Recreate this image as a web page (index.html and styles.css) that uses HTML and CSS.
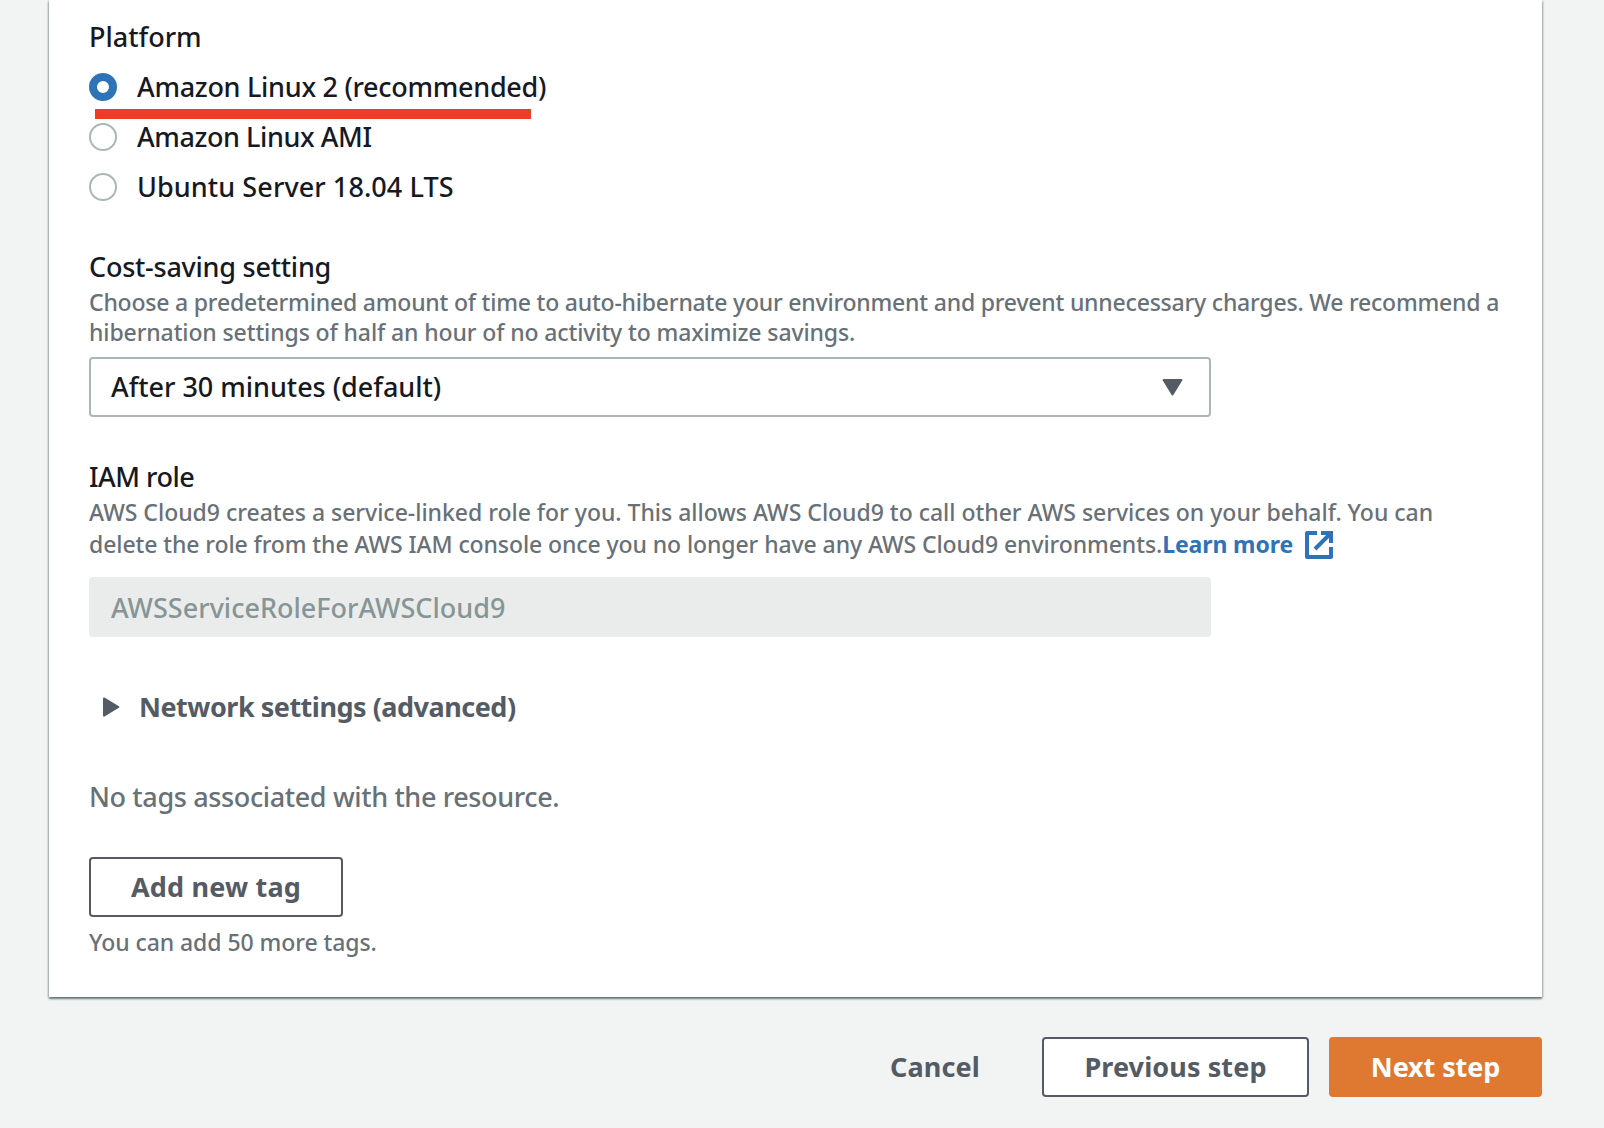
FILE: index.html
```html
<!DOCTYPE html>
<html lang="en">
<head>
<meta charset="utf-8">
<title>Create environment</title>
<link rel="stylesheet" href="styles.css">
</head>
<body>
<main class="panel">
  <div class="label ls-platform">Platform</div>
  <div class="radios">
    <label class="radio marked"><span class="dot on"></span><span class="ls-al2">Amazon Linux 2 (recommended)</span></label>
    <label class="radio"><span class="dot"></span><span class="ls-ami">Amazon Linux AMI</span></label>
    <label class="radio"><span class="dot"></span><span class="ls-ubuntu">Ubuntu Server 18.04 LTS</span></label>
  </div>

  <section class="field cost">
    <div class="label ls-cost">Cost-saving setting</div>
    <div class="desc">
      <span class="line ls-choose">Choose a predetermined amount of time to auto-hibernate your environment and prevent unnecessary charges. We recommend a</span>
      <span class="line ls-hib">hibernation settings of half an hour of no activity to maximize savings.</span>
    </div>
    <div class="select">
      <span class="ls-after">After 30 minutes (default)</span>
      <svg class="caret" width="21" height="17" viewBox="0 0 21 17"><path d="M1.6 1h17.8L10.5 15.4z" fill="#545b64" stroke="#545b64" stroke-width="2" stroke-linejoin="round"/></svg>
    </div>
  </section>

  <section class="field iam">
    <div class="label ls-iam">IAM role</div>
    <div class="desc loose">
      <span class="line ls-aws">AWS Cloud9 creates a service-linked role for you. This allows AWS Cloud9 to call other AWS services on your behalf. You can</span>
      <span class="line row"><span class="ls-delete">delete the role from the AWS IAM console once you no longer have any AWS Cloud9 environments.</span><a class="link">Learn more</a><svg class="ext" width="28" height="28" viewBox="0 0 28 28" fill="none" stroke="#2e73b8" stroke-width="4"><path d="M12 2H2v24h24V16" stroke-linejoin="round"/><path d="M16 2h10v10M25 3L10 18"/></svg></span>
    </div>
    <div class="input ls-role">AWSServiceRoleForAWSCloud9</div>
  </section>

  <div class="expander">
    <svg width="17" height="20" viewBox="0 0 17 20"><path d="M1 1.4L15.4 10 1 18.6z" fill="#545b64" stroke="#545b64" stroke-width="2" stroke-linejoin="round"/></svg>
    <span>Network settings (advanced)</span>
  </div>

  <div class="empty">No tags associated with the resource.</div>
  <button class="btn add">Add new tag</button>
  <div class="hint">You can add 50 more tags.</div>
</main>
<footer class="actions">
  <button class="btn cancel">Cancel</button>
  <button class="btn prev">Previous step</button>
  <button class="btn next">Next step</button>
</footer>
</body>
</html>
```
FILE: styles.css
```css
* { box-sizing: border-box; }

body {
  margin: 0;
  height: 1128px;
  overflow: hidden;
  background: #f2f3f3;
  color: #16191f;
  font: 500 27px/39px "Noto Sans", sans-serif;
  white-space: nowrap;
}

.panel {
  display: flex;
  flex-direction: column;
  align-items: flex-start;
  height: 997px;
  margin: 0 62px 0 49px;
  padding: 17px 40px 40px;
  background: #fff;
  box-shadow: 0 2px 2px 0 rgba(0, 28, 36, .42), 1px 1px 2px 0 rgba(0, 28, 36, .22), -1px 1px 2px 0 rgba(0, 28, 36, .22);
}

.radios { margin-top: 6px; }

.radio {
  display: flex;
  align-items: flex-start;
  gap: 20px;
  height: 50px;
  line-height: 49px;
  position: relative;
}

.dot {
  width: 28px;
  height: 28px;
  margin-top: 11px;
  border: 2px solid #aab7b8;
  border-radius: 50%;
  background: #fff;
}

.dot.on { border: 8px solid #2e73b8; }

/* red highlight stroke drawn over the selected option */
.marked::after {
  content: "";
  position: absolute;
  left: 6px;
  top: 47px;
  width: 436px;
  height: 10px;
  background: #ea3e25;
}

.cost { margin-top: 35px; }
.iam { margin-top: 40px; }

.desc {
  margin-top: 1px;
  color: #687078;
  font-size: 23px;
  line-height: 30px;
}

.desc.loose { margin-top: 0; line-height: 32px; }
.line { display: block; }
.line.row { display: flex; }

.link {
  color: #2e73b8;
  font-weight: 700;
  letter-spacing: -.1px;
}

.ext { margin: 3px 0 0 12px; }

.select, .input {
  display: flex;
  align-items: center;
  justify-content: space-between;
  width: 1122px;
  height: 60px;
  border-radius: 4px;
}

.select {
  margin-top: 10px;
  padding: 0 26px 1px 20px;
  border: 2px solid #aab7b8;
}

.caret { margin-top: 2px; }

.input {
  margin-top: 17px;
  padding: 0 22px;
  background: #eaecec;
  color: #879596;
}

.expander {
  display: flex;
  align-items: center;
  gap: 19px;
  margin: 50px 0 0 14px;
  color: #545b64;
  font-weight: 700;
  letter-spacing: -.49px;
}

.empty {
  margin-top: 51px;
  color: #687078;
  letter-spacing: -.37px;
}

.btn {
  height: 60px;
  padding: 0 0 1px;
  border: 2px solid #545b64;
  border-radius: 4px;
  background: #fff;
  color: #545b64;
  font: 700 27px/39px "Noto Sans", sans-serif;
  letter-spacing: .2px;
  text-align: center;
}

.add { width: 254px; margin-top: 41px; }

.hint {
  margin-top: 10px;
  color: #687078;
  font-size: 23px;
  line-height: 30px;
  letter-spacing: -.07px;
}

.actions {
  display: flex;
  justify-content: flex-end;
  margin: 40px 62px 0 0;
}

.cancel { width: 172px; margin-right: 21px; border-color: transparent; background: none; letter-spacing: .1px; }
.prev { width: 267px; margin-right: 20px; letter-spacing: .1px; }
.next { width: 213px; border-color: #df7932; background: #df7932; color: #fff; letter-spacing: -.1px; }

/* per-string tracking */
.ls-platform { letter-spacing: 0; }
.ls-al2 { letter-spacing: -.29px; }
.ls-ami { letter-spacing: -.42px; }
.ls-ubuntu { letter-spacing: .08px; }
.ls-cost { letter-spacing: -.25px; }
.ls-choose { letter-spacing: -.203px; }
.ls-hib { letter-spacing: -.11px; }
.ls-after { letter-spacing: -.03px; }
.ls-iam { letter-spacing: -.5px; }
.ls-aws { letter-spacing: -.016px; }
.ls-delete { letter-spacing: -.092px; }
.ls-role { letter-spacing: 0; }
```
